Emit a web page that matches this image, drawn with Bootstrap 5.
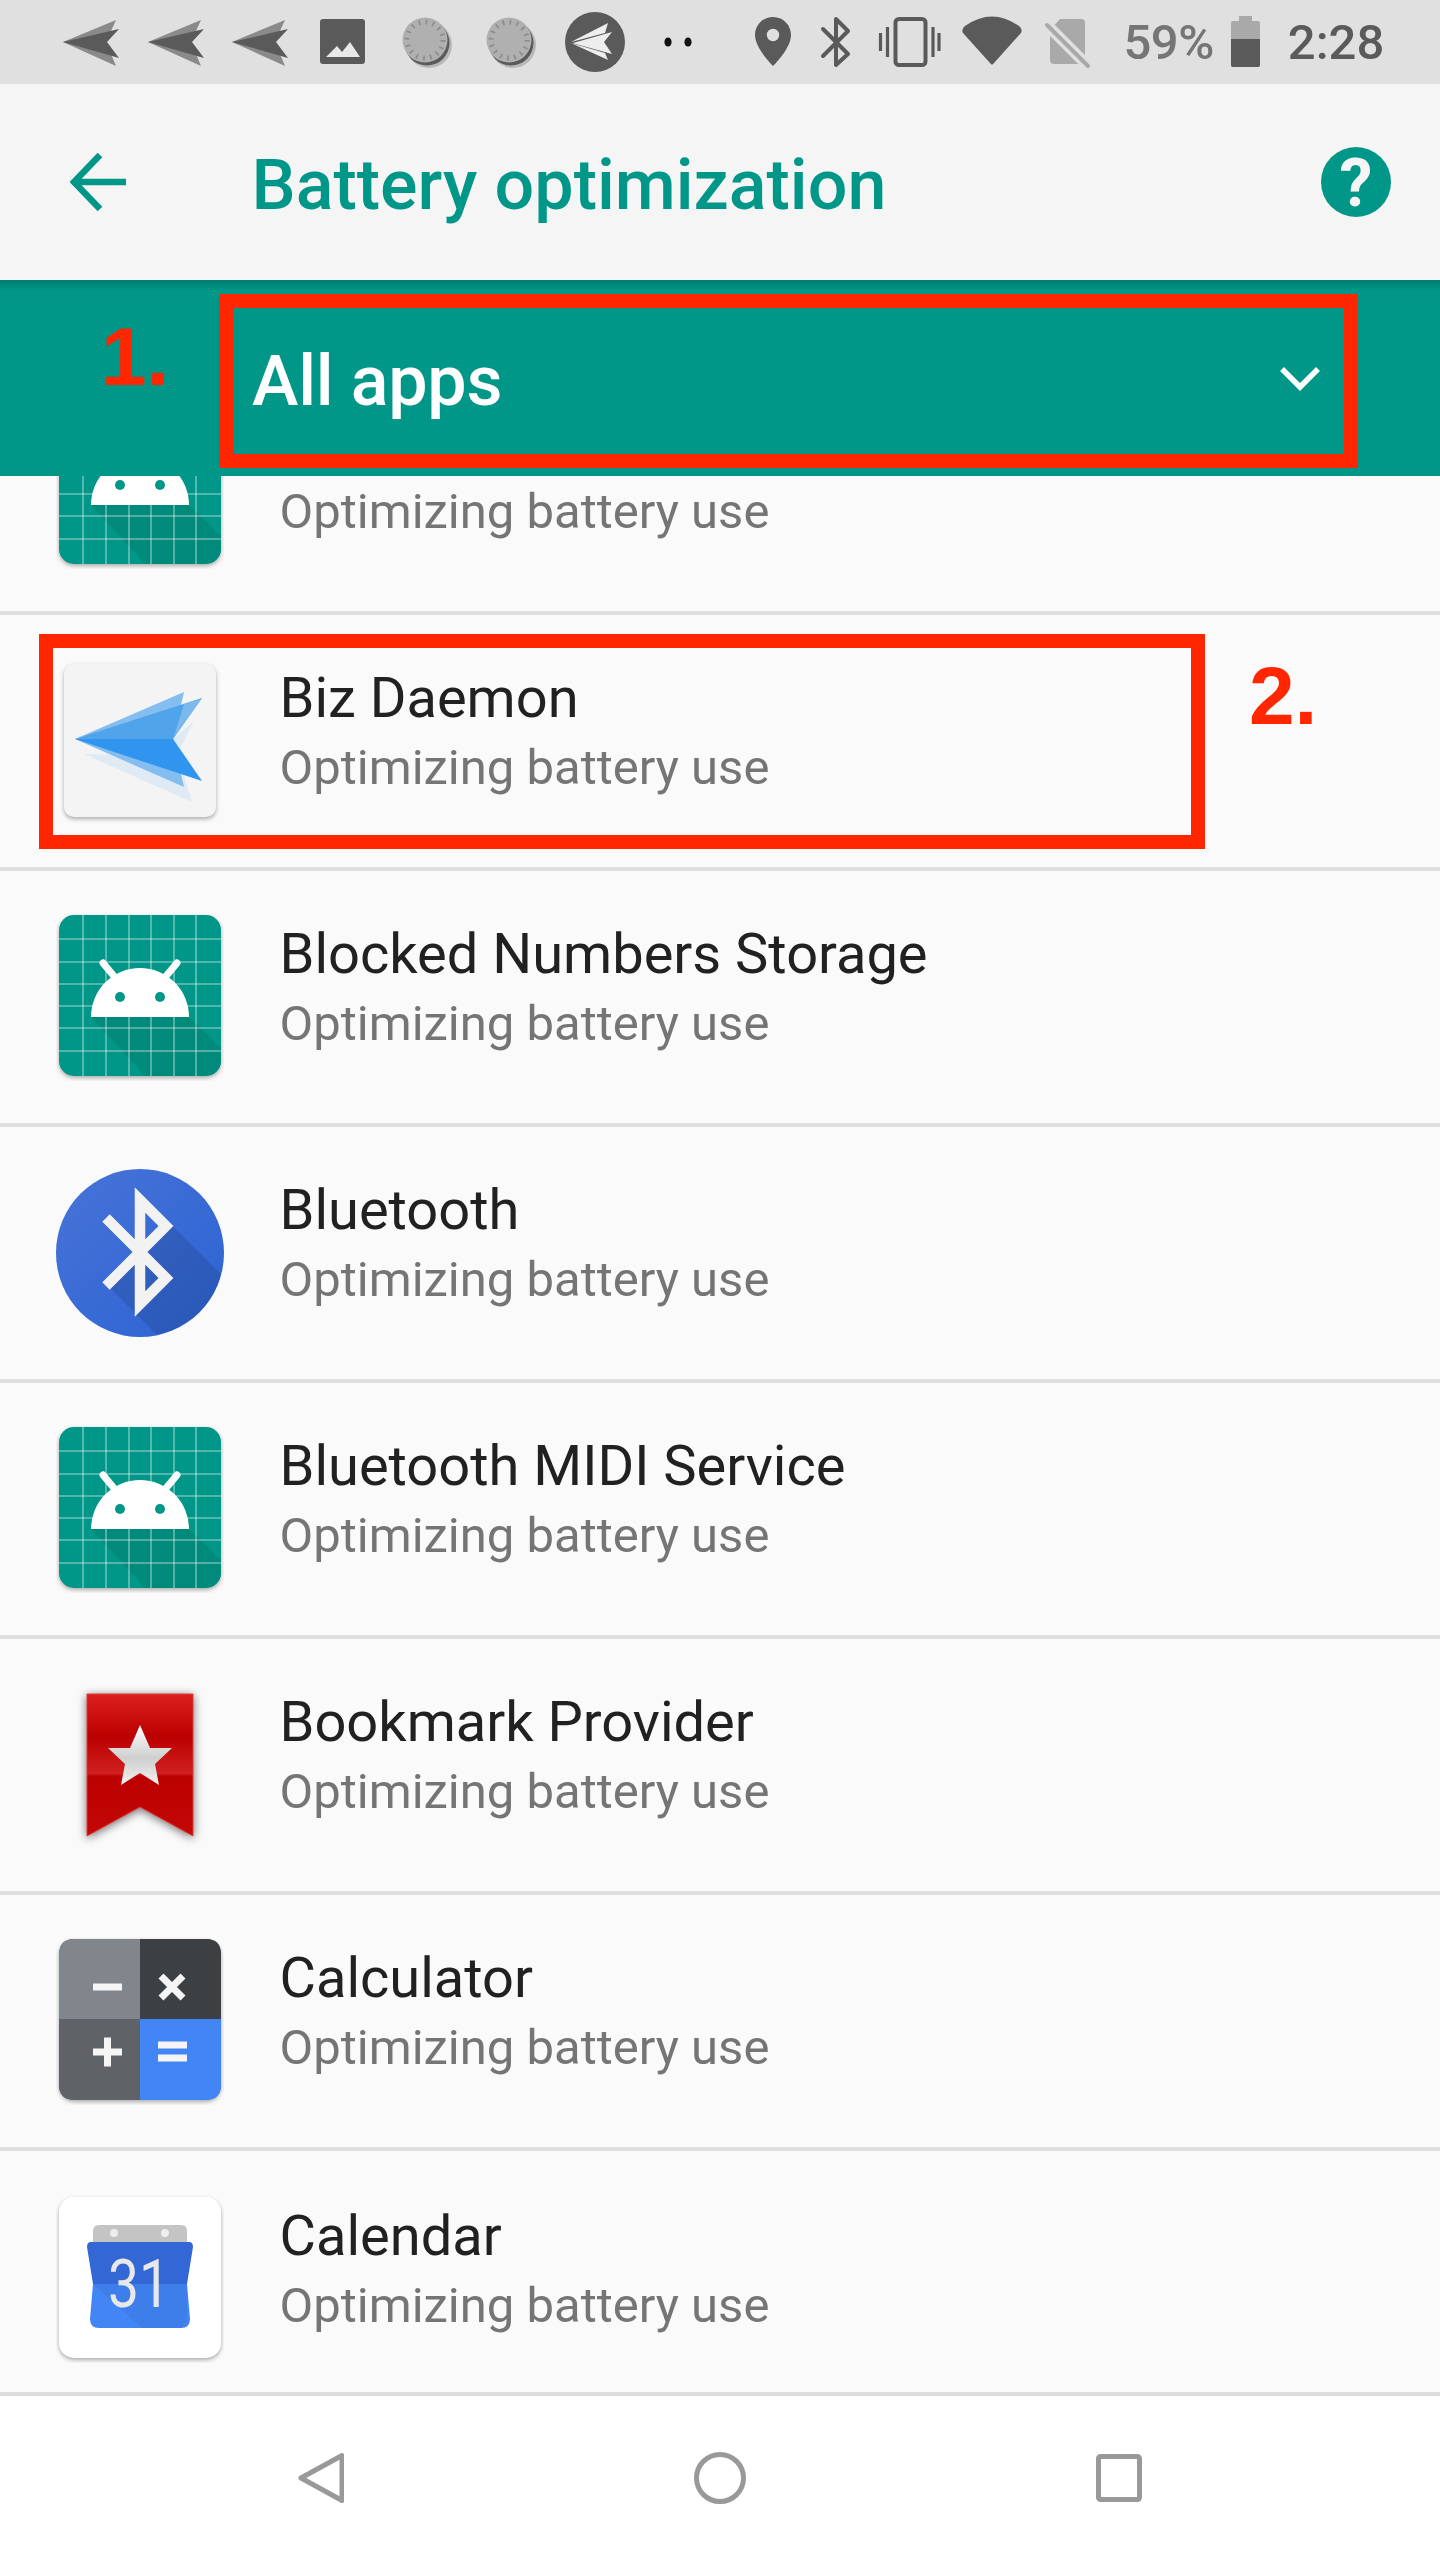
<!DOCTYPE html>
<html lang="en">
<head>
<meta charset="utf-8">
<title>Battery optimization</title>
<link href="https://cdn.jsdelivr.net/npm/bootstrap@5.3.0/dist/css/bootstrap.min.css" rel="stylesheet">
<style>
body{font-family:Roboto,"Liberation Sans",sans-serif;background:#fff;}
.svg-defs{display:block;width:0;height:0;}
.phone{width:1440px;height:2560px;overflow:hidden;}
.status-bar{height:84px;background:#e0e0e0;flex:none;}
.status-pct{font-size:49px;font-weight:500;line-height:84px;color:#757575;margin-left:23.5px;padding-top:2px;letter-spacing:-.5px;}
.status-batt{margin-left:17px;}
.status-time{font-size:49px;font-weight:500;line-height:84px;color:#5a5a5a;margin-left:28px;padding-top:2px;}
.app-bar{height:196px;background:#f5f5f5;flex:none;}
.bar-back{margin-left:70px;}
.bar-title{font-size:70px;font-weight:500;line-height:80px;color:#009688;margin-left:125.5px;padding-top:6px;}
.bar-help{margin-right:42px;}
.filter-band{height:196px;flex:none;background:linear-gradient(#007d70 0,#009688 10px);}
.filter-text{font-size:70px;font-weight:500;line-height:80px;color:#fff;margin-left:252px;padding-top:6px;letter-spacing:-.2px;}
.filter-chev{margin-right:119px;}
.app-list{overflow:hidden;background:#fafafa;--bs-list-group-bg:#fafafa;--bs-list-group-border-width:4px;--bs-list-group-border-color:#dfdfdf;--bs-list-group-border-radius:0;}
.app-row{height:256px;flex:none;padding:0 0 0 56px;}
.app-row-first{margin-top:-117px;}
.app-text{margin-left:55.5px;padding-bottom:17px;}
.app-name{font-size:56px;line-height:70px;color:#212121;}
.app-sub{font-size:49px;line-height:70px;color:#757575;}
.icon-lift{filter:drop-shadow(0 2px 2px rgba(0,0,0,.32));}
.ribbon-lift{filter:drop-shadow(0 2px 5px rgba(0,0,0,.55));}
.nav-keys{height:168px;flex:none;background:#fff;border-top:4px solid #dcdcdc;padding-left:298px;gap:350px;}
.annot-layer{inset:0;pointer-events:none;}
.red-frame{position:absolute;border:14px solid #ff2600;}
.frame-filter{left:219px;top:294px;width:1139px;height:174px;}
.frame-row{left:39px;top:634px;width:1166px;height:215px;}
.red-num{position:absolute;font-family:"Liberation Sans",Arial,sans-serif;font-weight:700;font-size:82px;line-height:82px;color:#ff2600;}
.num-one{left:101px;top:316px;}
.num-two{left:1249px;top:655px;}
</style>
</head>
<body>
<svg class="svg-defs" aria-hidden="true">
  <defs>
    <linearGradient id="ribbon" x1="0" y1="0" x2="0" y2="1">
      <stop offset="0" stop-color="#dc2020"/><stop offset=".3" stop-color="#bb0000"/><stop offset=".56" stop-color="#d02020"/><stop offset=".58" stop-color="#bb0000"/><stop offset="1" stop-color="#c40808"/>
    </linearGradient>
    <linearGradient id="starfill" x1="0" y1="0" x2="0" y2="1">
      <stop offset="0" stop-color="#fff"/><stop offset=".55" stop-color="#cfcfcf"/><stop offset="1" stop-color="#f2f2f2"/>
    </linearGradient>
    <linearGradient id="btfill" x1="0" y1="0" x2="1" y2="1">
      <stop offset="0" stop-color="#4773d8"/><stop offset="1" stop-color="#2c63d2"/>
    </linearGradient>
    <clipPath id="btclip"><circle cx="84" cy="84" r="84"/></clipPath>
    <clipPath id="andclip"><rect x="3" y="2" width="162" height="161" rx="15"/></clipPath>
    <symbol id="android" viewBox="0 0 168 168">
      <g class="icon-lift"><rect x="3" y="2" width="162" height="161" rx="15" fill="#009688"/></g>
      <g clip-path="url(#andclip)">
        <polygon points="35,104 133,104 170,140 170,170 96,170" fill="#00796b" opacity=".4"/>
        <g stroke="#fff" stroke-opacity=".42" stroke-width="1.6">
          <path d="M27 2V163M50 2V163M73 2V163M95 2V163M118 2V163M140 2V163"/>
          <path d="M3 26H165M3 49H165M3 71H165M3 93H165M3 115H165M3 138H165"/>
        </g>
      </g>
      <path d="M47 50L62 68M121 50L106 68" stroke="#fff" stroke-width="7" stroke-linecap="round"/>
      <path d="M35 104A49 49 0 0 1 133 104Z" fill="#fff"/>
      <circle cx="64" cy="84" r="5" fill="#009688"/><circle cx="104" cy="84" r="5" fill="#009688"/>
    </symbol>
    <symbol id="sbplane" viewBox="0 0 60 50">
      <polygon points="1,23 54,1 44,23 54,47" fill="#8a8a8a"/>
      <polygon points="1,23 57,10 45,23 57,39" fill="#5a5a5a"/>
    </symbol>
    <g id="sbdisc">
      <circle cx="27" cy="28" r="23" fill="#b8b8b8"/>
      <circle cx="25" cy="26" r="22.5" fill="#5a5a5a"/>
      <circle cx="23" cy="23" r="22.5" fill="#b0b0b0"/>
      <circle cx="23" cy="23" r="18" fill="none" stroke="#8e8e8e" stroke-width="5" stroke-dasharray="1.8 5.27"/>
    </g>
  </defs>
</svg>

<div class="phone d-flex flex-column position-relative">
  <div class="status-bar d-flex align-items-center">
    <svg width="700" height="84" viewBox="0 0 700 84" aria-hidden="true">
      <use href="#sbplane" x="62" y="19" width="60" height="50"/>
      <use href="#sbplane" x="147" y="19" width="60" height="50"/>
      <use href="#sbplane" x="231" y="19" width="60" height="50"/>
      <rect x="320" y="19" width="45" height="45" rx="3" fill="#5a5a5a"/>
      <polygon points="326,57 337,46 342,52 350,42 360,57" fill="#e8e8e8"/>
      <use href="#sbdisc" x="402" y="17"/>
      <use href="#sbdisc" x="486" y="17"/>
      <ellipse cx="595" cy="42" rx="30" ry="30" fill="#5a5a5a"/>
      <polygon points="571,42 608,23 605,33" fill="#eee"/>
      <polygon points="573,43 612,32 604,42 612,54 574,43.5" fill="#eee"/>
      <polygon points="571,43 608,60 605,53" fill="#eee"/>
      <ellipse cx="668" cy="42" rx="3.6" ry="4.6" fill="#111"/>
      <ellipse cx="688" cy="42" rx="3.6" ry="4.6" fill="#111"/>
    </svg>
    <svg width="400" height="84" viewBox="700 0 400 84" aria-hidden="true">
      <path d="M773 17C762 17 755 26 755 35C755 46 767 60 773 66C779 60 791 46 791 35C791 26 784 17 773 17Z" fill="#5a5a5a"/>
      <circle cx="773" cy="35" r="6.2" fill="#e0e0e0"/>
      <path d="M823 29L848 54L836 65V19L848 31L823 56" fill="none" stroke="#5a5a5a" stroke-width="4" stroke-linejoin="round" stroke-linecap="round"/>
      <rect x="895.5" y="19" width="30" height="46" rx="3.5" fill="none" stroke="#5a5a5a" stroke-width="4"/>
      <path d="M880.5 33V51M887.5 27V57M933 27V57M939 33V51" stroke="#5a5a5a" stroke-width="3.2"/>
      <path d="M965 26Q992 7 1019 26Q1023 29 1021 33L994 63Q992 66 990 63L963 33Q961 29 965 26Z" fill="#5a5a5a"/>
      <path d="M1060 19H1081Q1085 19 1085 23V60Q1085 64 1081 64H1054Q1050 64 1050 60V30Z" fill="#a9a9a9"/>
      <path d="M1046 24L1089 67" stroke="#e0e0e0" stroke-width="11"/>
      <path d="M1047 25L1088 66" stroke="#a9a9a9" stroke-width="4" stroke-linecap="round"/>
    </svg>
    <span class="status-pct">59%</span>
    <svg class="status-batt" width="29" height="84" viewBox="0 0 29 84" aria-hidden="true">
      <path d="M8 16H21V21H27Q29 21 29 23V65Q29 67 27 67H2Q0 67 0 65V23Q0 21 2 21H8Z" fill="#a9a9a9"/>
      <path d="M0 39H29V65Q29 67 27 67H2Q0 67 0 65Z" fill="#5a5a5a"/>
    </svg>
    <span class="status-time">2:28</span>
  </div>

  <div class="app-bar d-flex align-items-center">
    <svg class="bar-back" width="56" height="60" viewBox="0 0 56 60" aria-hidden="true">
      <path d="M56 30H6M30 3L4 30L30 57" fill="none" stroke="#009688" stroke-width="6.5"/>
    </svg>
    <span class="bar-title">Battery optimization</span>
    <svg class="bar-help ms-auto" width="84" height="92" viewBox="0 0 84 92" aria-hidden="true">
      <circle cx="42" cy="46" r="35" fill="#009688"/>
      <text x="42" y="70" text-anchor="middle" font-family="Roboto" font-weight="700" font-size="66" fill="#f5f5f5">?</text>
    </svg>
  </div>

  <div class="filter-band d-flex align-items-center">
    <span class="filter-text">All apps</span>
    <svg class="filter-chev ms-auto" width="42" height="26" viewBox="0 0 42 26" aria-hidden="true">
      <path d="M3 4L21 22L39 4" fill="none" stroke="#fff" stroke-width="5.5"/>
    </svg>
  </div>

  <div class="app-list list-group list-group-flush flex-grow-1 d-flex flex-column">
    <div class="app-row app-row-first list-group-item d-flex align-items-center">
      <svg width="168" height="168" aria-hidden="true"><use href="#android"/></svg>
      <div class="app-text"><div class="app-name">&nbsp;</div><div class="app-sub">Optimizing battery use</div></div>
    </div>
    <div class="app-row list-group-item d-flex align-items-center">
      <svg width="168" height="168" viewBox="0 0 168 168" aria-hidden="true">
        <g class="icon-lift"><rect x="8" y="7" width="152" height="153" rx="10" fill="#f4f4f4"/></g>
        <polygon points="28,97 136,145 122,100" fill="#dfeaf5"/>
        <polygon points="138,64 117,82 122,96" fill="#dfeaf5"/>
        <polygon points="19,82 128,35 117,82 128,130" fill="#84bdf0"/>
        <polygon points="19,82 146,41 117,82" fill="#4fa4ea"/>
        <polygon points="128,47 146,41 117,82 124,60" fill="#7ab8ee"/>
        <polygon points="19,82 117,82 146,124" fill="#2f95ef"/>
      </svg>
      <div class="app-text"><div class="app-name">Biz Daemon</div><div class="app-sub">Optimizing battery use</div></div>
    </div>
    <div class="app-row list-group-item d-flex align-items-center">
      <svg width="168" height="168" aria-hidden="true"><use href="#android"/></svg>
      <div class="app-text"><div class="app-name">Blocked Numbers Storage</div><div class="app-sub">Optimizing battery use</div></div>
    </div>
    <div class="app-row list-group-item d-flex align-items-center">
      <svg width="168" height="168" viewBox="0 0 168 168" aria-hidden="true">
        <circle cx="84" cy="84" r="84" fill="url(#btfill)"/>
        <polygon clip-path="url(#btclip)" points="117,57 178,118 130,178 100,165 51,116 84,83" fill="#000" opacity=".11"/>
        <path d="M50 117L110 57L84 31V135L110 109L50 49" fill="none" stroke="#f2f2f2" stroke-width="10.5"/>
      </svg>
      <div class="app-text"><div class="app-name">Bluetooth</div><div class="app-sub">Optimizing battery use</div></div>
    </div>
    <div class="app-row list-group-item d-flex align-items-center">
      <svg width="168" height="168" aria-hidden="true"><use href="#android"/></svg>
      <div class="app-text"><div class="app-name">Bluetooth MIDI Service</div><div class="app-sub">Optimizing battery use</div></div>
    </div>
    <div class="app-row list-group-item d-flex align-items-center">
      <svg width="168" height="168" viewBox="0 0 168 168" aria-hidden="true">
        <g class="ribbon-lift"><polygon points="31,13 137,13 137,155 84,126 31,155" fill="url(#ribbon)" stroke="#e23a3a" stroke-width="1"/></g>
        <polygon points="84,44 94,67 116,67 99,83 103,104 84,92 65,104 69,83 52,67 74,67" fill="url(#starfill)"/>
      </svg>
      <div class="app-text"><div class="app-name">Bookmark Provider</div><div class="app-sub">Optimizing battery use</div></div>
    </div>
    <div class="app-row list-group-item d-flex align-items-center">
      <svg width="168" height="168" viewBox="0 0 168 168" aria-hidden="true">
        <g class="icon-lift"><rect x="3" y="2" width="162" height="161" rx="15" fill="#3c4043"/></g>
        <path d="M84 2H18Q3 2 3 17V82H84Z" fill="#80868b"/>
        <path d="M84 2H150Q165 2 165 17V82H84Z" fill="#3c4043"/>
        <path d="M84 82H3V148Q3 163 18 163H84Z" fill="#5f6368"/>
        <path d="M84 82H165V148Q165 163 150 163H84Z" fill="#4285f4"/>
        <path d="M37 50H66M37 115H66M51.500 100.500V129.500M105 39L127 61M127 39L105 61M102 108H131M102 121H131" stroke="#f5f5f5" stroke-width="7" fill="none"/>
      </svg>
      <div class="app-text"><div class="app-name">Calculator</div><div class="app-sub">Optimizing battery use</div></div>
    </div>
    <div class="app-row list-group-item d-flex align-items-center">
      <svg width="168" height="168" viewBox="0 0 168 168" aria-hidden="true">
        <g class="icon-lift"><rect x="3" y="2" width="162" height="161" rx="15" fill="#fff"/></g>
        <path d="M37 50V36Q37 30 43 30H125Q131 30 131 36V50Z" fill="#c4c4c4"/>
        <circle cx="58" cy="38" r="4" fill="#eee"/><circle cx="109" cy="38" r="4" fill="#eee"/>
        <path d="M35 47H133Q137 47 137 52L131 89H37L31 52Q31 47 35 47Z" fill="#3367d6"/>
        <path d="M37 89H131L134 124Q134 133 125 133H43Q34 133 34 124Z" fill="#4285f4"/>
        <polygon points="37,89 86,133 125,133 131,125 131,89" fill="#3d7ce8" opacity=".8"/>
        <text x="83" y="112" text-anchor="middle" font-family="Roboto" font-size="66" fill="#e8e8e8" textLength="62" lengthAdjust="spacingAndGlyphs">31</text>
      </svg>
      <div class="app-text"><div class="app-name">Calendar</div><div class="app-sub">Optimizing battery use</div></div>
    </div>
  </div>

  <div class="nav-keys d-flex align-items-center">
    <svg width="46" height="52" viewBox="0 0 46 52" aria-hidden="true">
      <path d="M44 3.500V48.500L3 26Z" fill="none" stroke="#999" stroke-width="5" stroke-linejoin="round"/>
    </svg>
    <svg width="52" height="52" viewBox="0 0 52 52" aria-hidden="true">
      <circle cx="26" cy="26" r="23.500" fill="none" stroke="#999" stroke-width="5"/>
    </svg>
    <svg width="46" height="48" viewBox="0 0 46 48" aria-hidden="true">
      <rect x="2.500" y="2.500" width="41" height="43" rx="2" fill="none" stroke="#999" stroke-width="5"/>
    </svg>
  </div>

  <div class="annot-layer position-absolute">
    <div class="red-frame frame-filter"></div>
    <div class="red-frame frame-row"></div>
    <span class="red-num num-one">1.</span>
    <span class="red-num num-two">2.</span>
  </div>
</div>
</body>
</html>
